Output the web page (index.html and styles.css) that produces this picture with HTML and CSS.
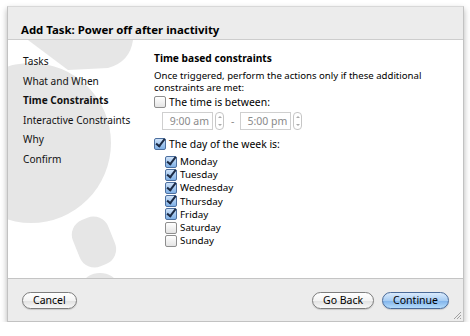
FILE: index.html
```html
<!DOCTYPE html>
<html lang="en">
<head>
    <meta charset="UTF-8">
    <title>Add Task</title>
    <link rel="stylesheet" href="styles.css">
</head>
<body>
    <div class="window">
        <div class="titlebar">Add Task: Power off after inactivity</div>

        <div class="content">
            <svg class="watermark" width="160" height="238" viewBox="0 0 160 238">
                <path d="M20 0 H125 Q122 22 100 28 L60 30 Z" fill="#e6e6e6"/>
                <circle cx="23" cy="103" r="80" fill="#e6e6e6"/>
                <rect x="67" y="177" width="38" height="50" rx="16" fill="#e6e6e6" transform="rotate(-22 86 202)"/>
                <ellipse cx="92" cy="243" rx="16" ry="10" fill="#e6e6e6"/>
            </svg>

            <ul class="steps">
                <li>Tasks</li>
                <li>What and When</li>
                <li class="current">Time Constraints</li>
                <li>Interactive Constraints</li>
                <li>Why</li>
                <li>Confirm</li>
            </ul>

            <div class="panel">
                <h2>Time based constraints</h2>
                <p class="note">Once triggered, perform the actions only if these additional<br>constraints are met:</p>

                <label class="option">
                    <span class="box"></span>
                    The time is between:
                </label>
                <div class="times">
                    <span class="field">9:00 am</span>
                    <span class="stepper"><i class="up"></i><i class="down"></i></span>
                    <span class="dash">-</span>
                    <span class="field">5:00 pm</span>
                    <span class="stepper"><i class="up"></i><i class="down"></i></span>
                </div>

                <label class="option second">
                    <span class="box checked"></span>
                    The day of the week is:
                </label>
                <ul class="days">
                    <li><span class="box checked"></span>Monday</li>
                    <li><span class="box checked"></span>Tuesday</li>
                    <li><span class="box checked"></span>Wednesday</li>
                    <li><span class="box checked"></span>Thursday</li>
                    <li><span class="box checked"></span>Friday</li>
                    <li><span class="box"></span>Saturday</li>
                    <li><span class="box"></span>Sunday</li>
                </ul>
            </div>
        </div>

        <div class="footer">
            <button type="button" class="btn">Cancel</button>
            <span class="spacer"></span>
            <button type="button" class="btn">Go Back</button>
            <button type="button" class="btn primary">Continue</button>
            <svg class="grip" width="10" height="10" viewBox="0 0 10 10">
                <path d="M9 2 L2 9 M9 5 L5 9 M9 8 L8 9" stroke="#a0a0a0" stroke-width="1"/>
            </svg>
        </div>
    </div>
</body>
</html>
```

FILE: styles.css
```css
body {
    margin: 0;
    background-color: #fff;
    font-family: "Noto Sans", "DejaVu Sans", sans-serif;
    font-size: 10px;
    color: #000;
}

.window {
    margin: 6px 0 0 7px;
    width: 457px;
    height: 316px;
    display: flex;
    flex-direction: column;
    box-sizing: border-box;
    border: 1px solid #c2c2c2;
    border-top-color: #d8d8d8;
    box-shadow: 0 3px 6px rgba(0, 0, 0, 0.3);
}

.titlebar {
    height: 33px;
    box-sizing: border-box;
    padding: 16px 0 0 13px;
    background-color: #ececec;
    border-bottom: 1px solid #cdcdcd;
    font-size: 11.4px;
    font-weight: bold;
    line-height: 14px;
}

.content {
    position: relative;
    overflow: hidden;
    height: 238px;
    display: flex;
    background-color: #fff;
}

.watermark {
    position: absolute;
    left: 0;
    top: 0;
}

.steps {
    position: relative;
    list-style: none;
    margin: 0;
    padding: 12px 0 0 15px;
    width: 131px;
    flex: none;
}

.steps li {
    font-size: 10.1px;
    line-height: 19.6px;
    color: #111;
}

.steps .current {
    font-weight: bold;
}

.panel {
    position: relative;
    padding-top: 11px;
}

.panel h2 {
    margin: 0;
    font-size: 10.2px;
    line-height: 14px;
}

.note {
    margin: 5px 0 0;
    font-size: 9.6px;
    line-height: 12px;
}

.option {
    display: flex;
    align-items: center;
    height: 16px;
    font-size: 10.4px;
    line-height: 16px;
}

.option.second {
    margin-top: 6px;
}

.box {
    display: inline-block;
    width: 10px;
    height: 10px;
    margin-right: 3px;
    border: 1px solid #8e8e8e;
    border-radius: 2px;
    background: linear-gradient(#fff, #e4e4e4);
    flex: none;
    position: relative;
}

.box.checked {
    border-color: #4c6f9f;
    background: linear-gradient(#cfe2f8, #7fb0e6);
}

.box.checked::after {
    content: "";
    position: absolute;
    left: 3px;
    top: -2px;
    width: 3px;
    height: 8px;
    border: solid #1b2a44;
    border-width: 0 2px 2px 0;
    transform: rotate(38deg);
}

.times {
    display: flex;
    align-items: center;
    margin: 2px 0 0 8px;
    height: 18px;
    color: #8a8a8a;
    font-size: 10.5px;
}

.field {
    width: 51px;
    height: 18px;
    box-sizing: border-box;
    border: 1px solid #cfcfcf;
    text-align: right;
    padding-right: 3px;
    line-height: 16px;
}

.stepper {
    display: flex;
    flex-direction: column;
    justify-content: space-around;
    align-items: center;
    width: 9px;
    height: 18px;
    margin-left: 2px;
    box-sizing: border-box;
    border: 1px solid #c6c6c6;
    border-radius: 4px;
}

.stepper i {
    width: 0;
    height: 0;
    border-left: 2px solid transparent;
    border-right: 2px solid transparent;
}

.stepper .up {
    border-bottom: 2px solid #aaa;
}

.stepper .down {
    border-top: 2px solid #aaa;
}

.dash {
    margin: 0 6px 0 7px;
    line-height: 18px;
}

.days {
    list-style: none;
    margin: 3px 0 0 11px;
    padding: 0;
}

.days li {
    display: flex;
    align-items: center;
    height: 13.2px;
    font-size: 9.8px;
    line-height: 13.2px;
}

.footer {
    position: relative;
    flex: 1;
    display: flex;
    align-items: center;
    gap: 8px;
    padding: 0 14px 0 14px;
    background-color: #ececec;
    border-top: 1px solid #c4c4c4;
}

.spacer {
    flex: 1;
}

.btn {
    height: 17px;
    padding: 0 10px;
    font-family: inherit;
    font-size: 10.5px;
    line-height: 15px;
    color: #000;
    border: 1px solid #7d7d7d;
    border-radius: 9px;
    background: linear-gradient(#fff 0%, #f3f3f3 50%, #e0e0e0 51%, #f8f8f8 100%);
    box-shadow: 0 1px 1px rgba(0, 0, 0, 0.15);
}

.btn.primary {
    border-color: #4a6a98;
    background: linear-gradient(#d9eafc 0%, #a8cdf3 50%, #7fb2ea 51%, #b5dcfb 100%);
}

.grip {
    position: absolute;
    right: 1px;
    bottom: 1px;
}
```
